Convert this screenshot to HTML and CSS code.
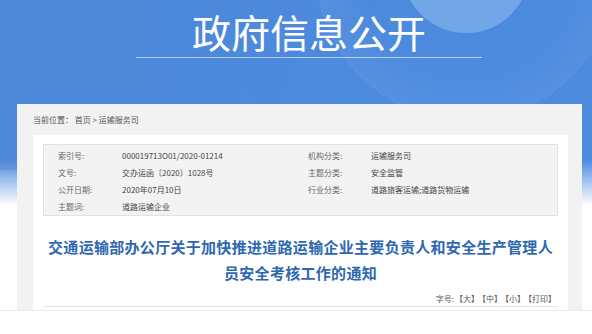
FILE: index.html
```html
<!DOCTYPE html>
<html lang="zh-CN">
<head>
    <meta charset="UTF-8">
    <meta name="viewport" content="width=device-width, initial-scale=1.0">
    <title>政府信息公开</title>
    <link rel="stylesheet" href="styles.css">
</head>
<body>
    <!-- Banner -->
    <div class="banner">
        <div class="globe"></div>
        <div class="globe-ring"></div>
        <h1 class="banner-title">政府信息公开</h1>
    </div>

    <div class="page">
        <div class="crumb">当前位置：&nbsp;首页 &gt; 运输服务司</div>

        <div class="article">
            <!-- Document meta -->
            <div class="meta">
                <span class="meta-label">索引号:</span>
                <span class="meta-value">000019713O01/2020-01214</span>
                <span class="meta-label">机构分类:</span>
                <span class="meta-value">运输服务司</span>

                <span class="meta-label">文号:</span>
                <span class="meta-value">交办运函〔2020〕1028号</span>
                <span class="meta-label">主题分类:</span>
                <span class="meta-value">安全监管</span>

                <span class="meta-label">公开日期:</span>
                <span class="meta-value">2020年07月10日</span>
                <span class="meta-label">行业分类:</span>
                <span class="meta-value">道路旅客运输;道路货物运输</span>

                <span class="meta-label">主题词:</span>
                <span class="meta-value">道路运输企业</span>
            </div>

            <h2 class="article-title">交通运输部办公厅关于加快推进道路运输企业主要负责人和安全生产管理人员安全考核工作的通知</h2>

            <div class="tools">字号:<a>【大】</a><a>【中】</a><a>【小】</a><a>【打印】</a></div>
        </div>
    </div>
</body>
</html>
```

FILE: styles.css
```css
* {
    box-sizing: border-box;
    margin: 0;
    padding: 0;
}

:root {
    --blue-title: #2d68b1;
    --panel: #f2f2f2;
    --text: #444;
    --label: #666;
}

body {
    font-family: "Noto Sans CJK SC", "Noto Sans", sans-serif;
    background:
        linear-gradient(90deg, rgba(80, 130, 200, 0.35) 0%, rgba(80, 130, 200, 0) 60%) 0 0 / 100% 170px no-repeat,
        linear-gradient(180deg, #4c8ade 0px, #4d8bdf 160px, #ffffff 205px) 0 0 / 100% 100% no-repeat,
        #fff;
    min-height: 100vh;
    color: var(--text);
    overflow: hidden;
}

.banner {
    position: relative;
    height: 104px;
    padding-top: 12px;
}

.globe {
    position: absolute;
    left: 402px;
    top: -95px;
    width: 128px;
    height: 128px;
    border-radius: 50%;
    background: rgba(160, 200, 245, 0.45);
}

.globe-ring {
    position: absolute;
    left: 316px;
    top: -180px;
    width: 300px;
    height: 300px;
    border-radius: 50%;
    border: 1px dotted rgba(255, 255, 255, 0.18);
    background: radial-gradient(circle, rgba(255, 255, 255, 0) 45%, rgba(255, 255, 255, 0.05) 70%, rgba(255, 255, 255, 0) 72%);
}

.banner-title {
    position: relative;
    width: 346px;
    margin-left: 136px;
    padding-bottom: 6px;
    border-bottom: 1px solid rgba(255, 255, 255, 0.6);
    font-size: 39px;
    line-height: 39px;
    font-weight: normal;
    color: #fff;
    text-align: center;
}

.page {
    width: 565px;
    margin-left: 17px;
    padding: 0 14px 0 16px;
    background: var(--panel);
    position: relative;
}

.page::after {
    content: "";
    position: absolute;
    left: -17px;
    width: 592px;
    bottom: -1px;
    height: 1px;
    background: #ebebeb;
}

.crumb {
    height: 31px;
    line-height: 31px;
    font-size: 8px;
    color: #555;
}

.article {
    background: #fff;
    padding: 9px 10px 3px;
}

.meta {
    display: grid;
    grid-template-columns: 64px 186px 63px auto;
    grid-auto-rows: 17px;
    padding: 2px 0 0 14px;
    height: 72px;
    background: #f3f3f3;
    border: 1px solid #e2e2e2;
    font-size: 8px;
    line-height: 17px;
}

.meta-label {
    color: var(--label);
}

.meta-value {
    color: var(--text);
}

.article-title {
    margin-top: 18px;
    font-size: 15px;
    letter-spacing: 0.3px;
    line-height: 26px;
    font-weight: bold;
    color: var(--blue-title);
    text-align: center;
}

.tools {
    margin-top: 6px;
    height: 14px;
    line-height: 13px;
    font-size: 8px;
    color: #555;
    text-align: right;
    padding-right: 2px;
    border-bottom: 1px solid #e8e8e8;
    box-sizing: content-box;
}

.tools a {
    color: #555;
    cursor: pointer;
    margin-left: 3px;
}

.tools a:first-child {
    margin-left: 1px;
}
```
